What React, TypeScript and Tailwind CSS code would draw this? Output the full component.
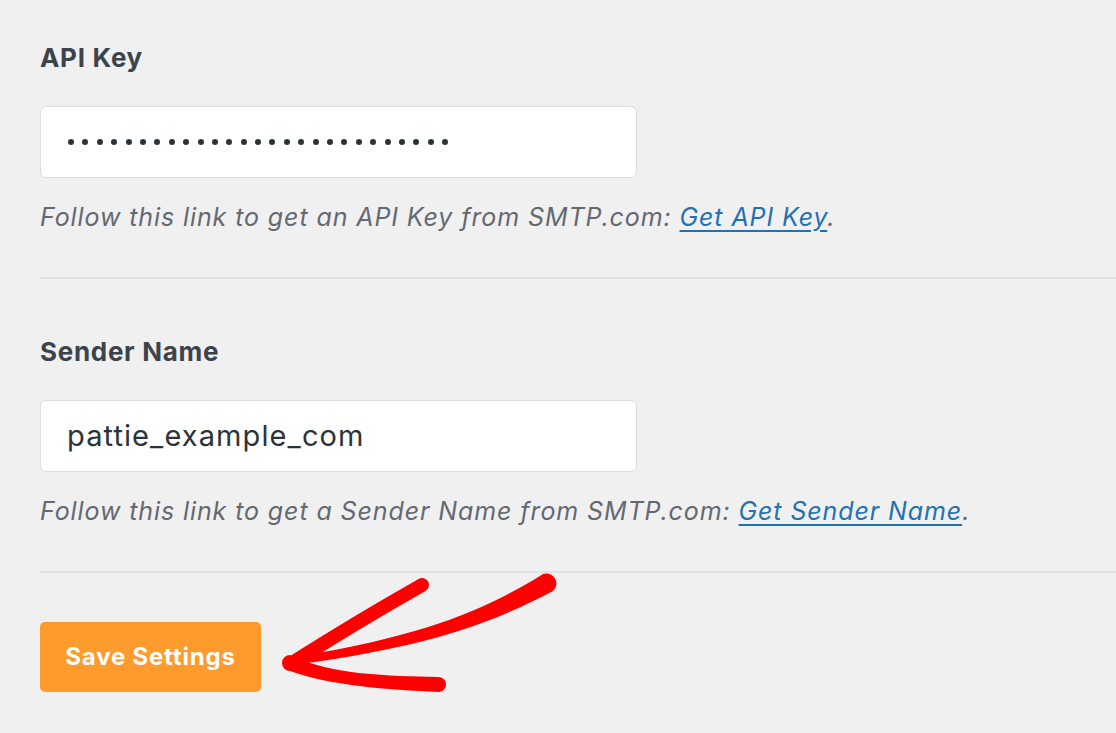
export default function App() {
  return (
    <div
      className="relative min-h-[733px] w-full overflow-hidden bg-[#f0f0f1] pl-10 pt-[43px]"
      style={{ fontFamily: 'Inter, "Liberation Sans", Arial, sans-serif' }}
    >
      <Field
        label="API Key"
        help="Follow this link to get an API Key from SMTP.com:"
        link="Get API Key"
      >
        <div className="flex items-center gap-[8.4px] pl-[27px]">
          {Array.from({ length: 27 }).map((_, i) => (
            <span key={i} className="h-[6px] w-[6px] rounded-full bg-[#2c3338]" />
          ))}
        </div>
      </Field>
      <div className="mt-[58px]" />
      <Field
        label="Sender Name"
        help="Follow this link to get a Sender Name from SMTP.com:"
        link="Get Sender Name"
      >
        <span className="pl-[26px] text-[29px] tracking-[1.1px] text-[#2c3338]">pattie_example_com</span>
      </Field>
      <button className="mt-[49px] flex h-[70px] w-[221px] items-center justify-center rounded-[5px] bg-[#ff9b2c] text-[24px] font-bold tracking-[0.8px] text-white">
        Save Settings
      </button>

      {/* hand drawn arrow pointing at the button */}
      <svg
        className="absolute left-[270px] top-[565px]"
        width="300"
        height="135"
        viewBox="0 0 300 135"
        fill="none"
      >
        <path d="M152 20 Q 85 58 27 95" stroke="#ff0000" strokeWidth="14" strokeLinecap="round" />
        <path
          d="M270 11 C 215 44 158 70 30 91 L 30 99 C 162 81 224 57 283 26 A 8 8 0 0 0 270 11 Z"
          fill="#ff0000"
        />
        <path
          d="M20 90 C 60 110 120 111 168 112 A 7.5 7.5 0 0 1 169 127 C 118 125 58 120 20 106 A 8 8 0 0 1 20 90 Z"
          fill="#ff0000"
        />
        <circle cx="26" cy="98" r="9" fill="#ff0000" />
      </svg>
    </div>
  )
}

function Field({
  label,
  help,
  link,
  children,
}: {
  label: string
  help: string
  link: string
  children: React.ReactNode
}) {
  return (
    <div>
      <div className="h-[30px] text-[26px] font-bold leading-[30px] tracking-[0.7px] text-[#3c434a]">{label}</div>
      <div className="mt-[33px] flex h-[72px] w-[597px] items-center rounded-[6px] border border-[#dcdcde] bg-white">
        {children}
      </div>
      <p className="mt-6 h-[30px] text-[25px] italic leading-[30px] tracking-[0.9px] text-[#646970]">
        {help}{' '}
        <a className="text-[#2271b1] underline underline-offset-4">{link}</a>.
      </p>
      <div className="mt-[45px] h-[2px] bg-[#e2e2e4]" />
    </div>
  )
}
